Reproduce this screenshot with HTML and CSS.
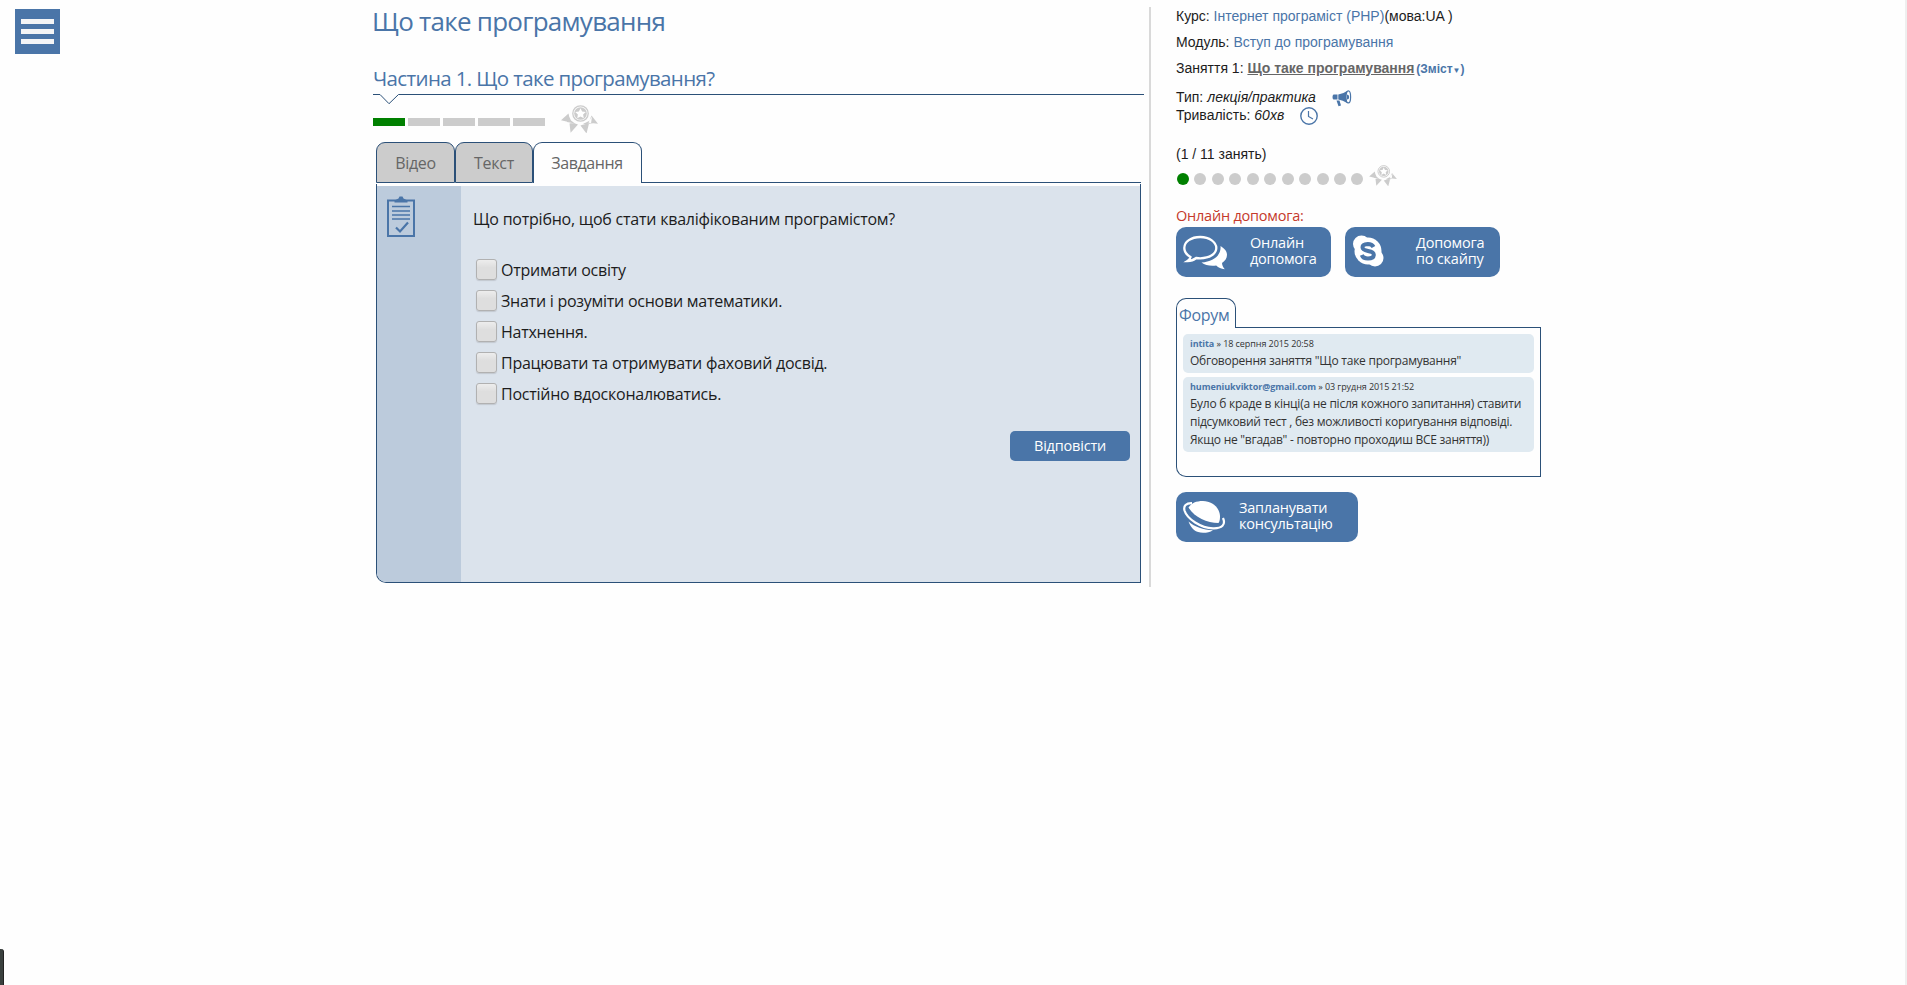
FILE: index.html
```
<!DOCTYPE html>
<html lang="uk">
<head>
<meta charset="utf-8">
<title>Що таке програмування</title>
<link rel="stylesheet" href="styles.css">
</head>
<body>
<svg class="defs" aria-hidden="true">
  <symbol id="medal" viewBox="0 0 37 28">
    <circle cx="19.5" cy="8.5" r="7.700" fill="none" stroke="#ccc" stroke-width="1.3"/>
    <circle cx="19.5" cy="8.5" r="6.300" fill="#ccc"/>
    <path d="M19.5 3.2l1.600 3.400 3.700.5-2.700 2.500.700 3.700-3.300-1.900-3.300 1.900.700-3.700-2.700-2.500 3.700-.5z" fill="#fff"/>
    <path d="M7.500 8.500L9.500 17.500 0 15.200zM30.500 10.500l6.500 8.200-9.400-.9zM8.500 18.500c3-.500 6 0 8.500 1L9.600 27.800zM19.500 20.500c3-1 5.500-2 8.500-2L25.500 28.500zM7 9l3 6.500 4 3-8-1.500zM31 11.500l-3 4.500-6 3 8-.5z" fill="#ccc"/>
  </symbol>
</svg>
<nav class="side">
  <button class="burger" aria-label="Меню"><i></i><i></i><i></i></button>
</nav>
<main class="lesson">
  <h1>Що таке програмування</h1>
  <h2>Частина 1. Що таке програмування?</h2>
  <svg class="rule" width="771" height="11" viewBox="0 0 771 11"><path d="M0 .5H7L16 9.700 25.500.5H771" fill="none" stroke="#2b5078"/></svg>
  <div class="progress">
    <i class="done"></i><i></i><i></i><i></i><i></i>
    <svg class="medal-lg"><use href="#medal"/></svg>
  </div>
  <div class="tabs">
    <a class="tab video">Відео</a><a class="tab text">Текст</a><a class="tab active">Завдання</a><span class="tab-line"></span>
  </div>
  <section class="panel">
    <div class="strip">
      <svg width="28" height="42" viewBox="0 0 28 42" fill="none" stroke="#4a75a8">
        <path d="M1 4.500H27V40H1z" stroke-width="2"/>
        <path d="M5 10.500H23M5 15H23M5 19H23M5 23H23" stroke-width="1.400"/>
        <path d="M9 31.500l4 4 8-9" stroke-width="2.200"/>
        <path d="M7.500 6.500V4.500L11.500 2.500 12.500.5h3l1 2 4 2v2z" fill="#4a75a8" stroke="none"/>
      </svg>
    </div>
    <div class="task">
      <p class="question">Що потрібно, щоб стати кваліфікованим програмістом?</p>
      <label class="option"><i></i><span>Отримати освіту</span></label>
      <label class="option"><i></i><span>Знати і розуміти основи математики.</span></label>
      <label class="option"><i></i><span>Натхнення.</span></label>
      <label class="option"><i></i><span>Працювати та отримувати фаховий досвід.</span></label>
      <label class="option"><i></i><span>Постійно вдосконалюватись.</span></label>
      <button class="answer">Відповісти</button>
    </div>
  </section>
</main>
<div class="divider"></div>
<aside class="info">
  <p class="line">Курс: <a>Інтернет програміст (PHP)</a>(мова:UA )</p>
  <p class="line">Модуль: <a>Вступ до програмування</a></p>
  <p class="line">Заняття 1: <b class="current">Що таке програмування</b> <b class="contents">(Зміст<small>▼</small>)</b></p>
  <p class="meta type">Тип: <em>лекція/практика</em>
    <svg width="20" height="17" viewBox="0 0 20 17" fill="#4a75a8"><path d="M1.500 4.500H5.500v5H1.500Q.5 9 .5 7T1.500 4.500zM6.300 4.500Q11 4 15 1v12Q11 10 6.300 9.500zM4.500 10.500H7.500l1.500 5-2.500.700z"/><ellipse cx="16.300" cy="6.900" rx="2.300" ry="6" fill="#fff" stroke="#4a75a8" stroke-width="1.200"/><path d="M15 4.500q2.200 0 2.200 2.500T15 9.500z"/></svg></p>
  <p class="meta">Тривалість: <em>60хв</em>
    <svg width="18" height="18" viewBox="0 0 18 18" fill="none" stroke="#4a75a8"><circle cx="9" cy="9" r="8.200" stroke-width="1.400"/><path d="M8.500 4V9.500L13 12" stroke-width="1.200"/></svg></p>
  <p class="count">(1 / 11 занять)</p>
  <div class="dots"><i class="done"></i><i></i><i></i><i></i><i></i><i></i><i></i><i></i><i></i><i></i><i></i><svg class="medal-sm"><use href="#medal"/></svg></div>
  <p class="help">Онлайн допомога:</p>
  <div class="buttons">
    <a class="btn chat">
      <svg width="46" height="36" viewBox="0 0 46 36"><path d="M17.300 2C8 2 1.300 6.800 1.300 13c0 4 2.500 7 6.200 9-.3 1.800-1.300 3-3 4 3.600 0 6.500-1.200 8.700-3 1.300.2 2.700.3 4.100.3 9.300 0 16-4.500 16-10.300S26.600 2 17.300 2z" fill="none" stroke="#fff" stroke-width="2.300"/><path d="M37.500 11c4 2.500 6.500 5 6.500 8.800 0 3.700-2 6.200-5 8.200.2 2.500 1 4.200 2.800 6.300-3.800-.3-6.300-1.500-8.600-3.700-6 .8-11-.4-14.700-3C31 26.500 38.500 20 37.500 11z" fill="#fff"/></svg>
      <span>Онлайн<br>допомога</span></a>
    <a class="btn skype">
      <svg width="32" height="32" viewBox="0 0 32 32"><g fill="#fff"><circle cx="16" cy="16" r="13.500"/><circle cx="9.500" cy="9" r="8.500"/><circle cx="23" cy="23" r="8.500"/></g><path d="M21.500 12Q20 9 15.800 9 10.500 9.200 10.500 12.300 10.500 15 16 16 22 17 21.800 20 21.500 23.500 16 23.500 11 23.500 9.800 20" fill="none" stroke="#4a75a8" stroke-width="4"/></svg>
      <span>Допомога<br>по скайпу</span></a>
  </div>
  <section class="forum">
    <div class="forum-head"><h3>Форум</h3><span></span></div>
    <div class="forum-body">
      <article><p class="who"><b>intita</b> » 18 серпня 2015 20:58</p><p class="msg">Обговорення заняття "Що таке програмування"</p></article>
      <article><p class="who"><b>humeniukviktor@gmail.com</b> » 03 грудня 2015 21:52</p><p class="msg">Було б краде в кінці(а не після кожного запитання) ставити<br>підсумковий тест , без можливості коригування відповіді.<br>Якщо не "вгадав" - повторно проходиш ВСЕ заняття))</p></article>
    </div>
  </section>
  <a class="btn plan">
    <svg width="44" height="34" viewBox="0 0 44 34"><path d="M5.500 7.500C8.500 3 13 1 20 1c9 0 16.500 6.500 17 15 .1 3-.5 5.500-1.500 7C24 23 11 17 5.500 7.500z" fill="#fff"/><path d="M9 3.200C3 3 .3 6 1.500 10.500 4 19 18 28 30 28.300c9 .3 13-3.500 10-10.300" fill="none" stroke="#fff" stroke-width="2.200"/><path d="M5.500 21.500c6.500 5.500 14.500 8.500 24.500 8.700-3 1.800-6 2.600-10 2.600-7 0-12-4-14.500-11.300z" fill="#fff"/></svg>
    <span>Запланувати<br>консультацію</span></a>
</aside>
<div class="edge"></div>
<div class="corner"></div>
</body>
</html>
```
FILE: styles.css
```
* { box-sizing: border-box; }
body { margin: 0; height: 985px; display: flex; align-items: flex-start; overflow: hidden; background: #fefefe; color: #1c1c1c; font: 16px "Open Sans", "Noto Sans", sans-serif; }
h1, h2, h3, p { margin: 0; font-weight: 400; white-space: nowrap; }
svg { display: block; flex: none; }
.defs { display: none; }

.side { width: 373px; flex: none; padding: 9px 0 0 15px; }
.burger { width: 45px; height: 45px; border: 0; padding: 10px 6px; background: #4a75a8; display: flex; flex-direction: column; gap: 5px; }
.burger i { width: 33px; height: 5px; background: #f3f4f6; }

.lesson { width: 776px; flex: none; }
h1 { margin-left: -1px; font-size: 26px; line-height: 42px; letter-spacing: -.75px; color: #4a75a8; }
h2 { margin-top: 22px; font-size: 20.5px; line-height: 28px; letter-spacing: -.64px; color: #4a75a8; }
.rule { margin-top: 2px; }
.progress { display: flex; gap: 3px; height: 28px; }
.progress i { width: 32px; height: 8px; margin-top: 13px; background: #ccc; }
.progress i.done { background: green; }
.medal-lg { width: 37px; height: 28px; margin-left: 13px; }

.tabs { display: flex; margin: 9px 0 0 3px; width: 765px; height: 41px; color: #666; line-height: 41px; letter-spacing: -.3px; }
.tab { border: 1px solid #2b5078; border-radius: 9px 9px 0 0; background: #ccc; text-align: center; }
.video { width: 79px; }
.text { width: 78px; }
.tab.active { width: 109px; background: #fefefe; border-bottom: 0; letter-spacing: -.4px; padding-right: 1px; }
.tab-line { flex: 1; margin-left: -1px; border-bottom: 1px solid #2b5078; }

.panel { display: flex; margin: 1px 0 0 3px; width: 765px; height: 399px; padding-top: 2px; border: 1px solid #2b5078; border-top: 0; border-radius: 0 0 0 10px; overflow: hidden; }
.strip { width: 84px; padding: 10px 0 0 10px; background: #bccbdc; }
.task { flex: 1; display: flex; flex-direction: column; padding: 21px 10px 0 12px; background: #dbe3ec; }
.question { margin-bottom: 23px; line-height: 24px; letter-spacing: -.23px; }
.option { display: flex; align-items: center; gap: 4px; height: 31px; padding-left: 3px; letter-spacing: -.25px; }
.option i { width: 21px; height: 21px; border: 1px solid #b1b1b1; border-radius: 3px; background: linear-gradient(#ededed, #dedede 40%); box-shadow: 0 1px 1px #c2c8d0; }
.answer { align-self: flex-end; margin-top: 22px; width: 120px; height: 30px; padding: 0; border: 0; border-radius: 5px; background: #4a75a8; color: #fff; font: 14.5px/30px "Open Sans", sans-serif; letter-spacing: -.2px; }

.divider { width: 2px; height: 580px; margin-top: 7px; background: #d9d9d9; flex: none; }

.info { width: 754px; flex: none; padding-left: 25px; }
.line { height: 26px; font: 14px/26px "Liberation Sans", Arial, sans-serif; }
.line:first-child { margin-top: 3px; }
.info a { color: #4a75a8; }
.current { color: #666; text-decoration: underline; }
.contents { margin-left: -2px; font-size: 12px; color: #4a75a8; }
.contents small { font-size: 8px; }
.meta { display: flex; align-items: center; height: 18px; font: 14px/18px "Liberation Sans", Arial, sans-serif; }
.meta em { margin-left: 4px; }
.meta svg { margin-left: 16px; position: relative; top: 1px; }
.type { margin-top: 7px; }
.count { margin-top: 17px; font: 14px/26px "Liberation Sans", Arial, sans-serif; }
.dots { display: flex; gap: 5.45px; height: 22px; margin-top: -2px; padding-left: 1px; }
.dots i { width: 12px; height: 12px; margin-top: 8px; border-radius: 50%; background: #ccc; }
.dots i.done { background: green; }
.medal-sm { width: 28px; height: 21px; }
.help { margin-top: 17px; font-size: 14.5px; line-height: 23px; letter-spacing: -.22px; color: #c5392b; }
.buttons { display: flex; gap: 14px; }
.info .btn { display: flex; height: 50px; padding: 8px 0 0 7px; border-radius: 10px; background: #4a75a8; color: #fff; font-size: 14.5px; line-height: 16px; letter-spacing: -.22px; }
.chat, .skype { width: 155px; }
.chat span { margin-left: 21px; }
.skype span { margin-left: 32px; }
.plan { width: 182px; margin-top: 15px; }
.plan span { margin-left: 12px; }

.forum { width: 365px; margin-top: 21px; }
.forum-head { display: flex; height: 30px; }
h3 { width: 60px; padding-left: 2px; border: 1px solid #2b5078; border-width: 1px 1px 0; border-radius: 10px 10px 0 0; font-size: 16px; line-height: 33px; letter-spacing: -.3px; color: #4a75a8; }
.forum-head span { flex: 1; margin-left: -1px; border-bottom: 1px solid #2b5078; }
.forum-body { height: 149px; padding: 6px; border: 1px solid #2b5078; border-top: 0; border-radius: 0 0 0 10px; }
article { padding: 2px 7px 3px; border-radius: 5px; background: #e0eaf1; }
article + article { margin-top: 4px; }
.who { height: 16px; font-size: 9px; line-height: 16px; letter-spacing: -.07px; color: #333; }
.who b { color: #4a75a8; }
.msg { font-size: 12px; line-height: 18px; letter-spacing: -.25px; color: #333; }

.edge { width: 2px; height: 985px; margin-left: auto; background: #efefef; }
.corner { position: fixed; left: 0; bottom: 0; width: 4px; height: 36px; background: #3a403e; border-right: 1px solid #222; border-radius: 0 3px 0 0; }
```
